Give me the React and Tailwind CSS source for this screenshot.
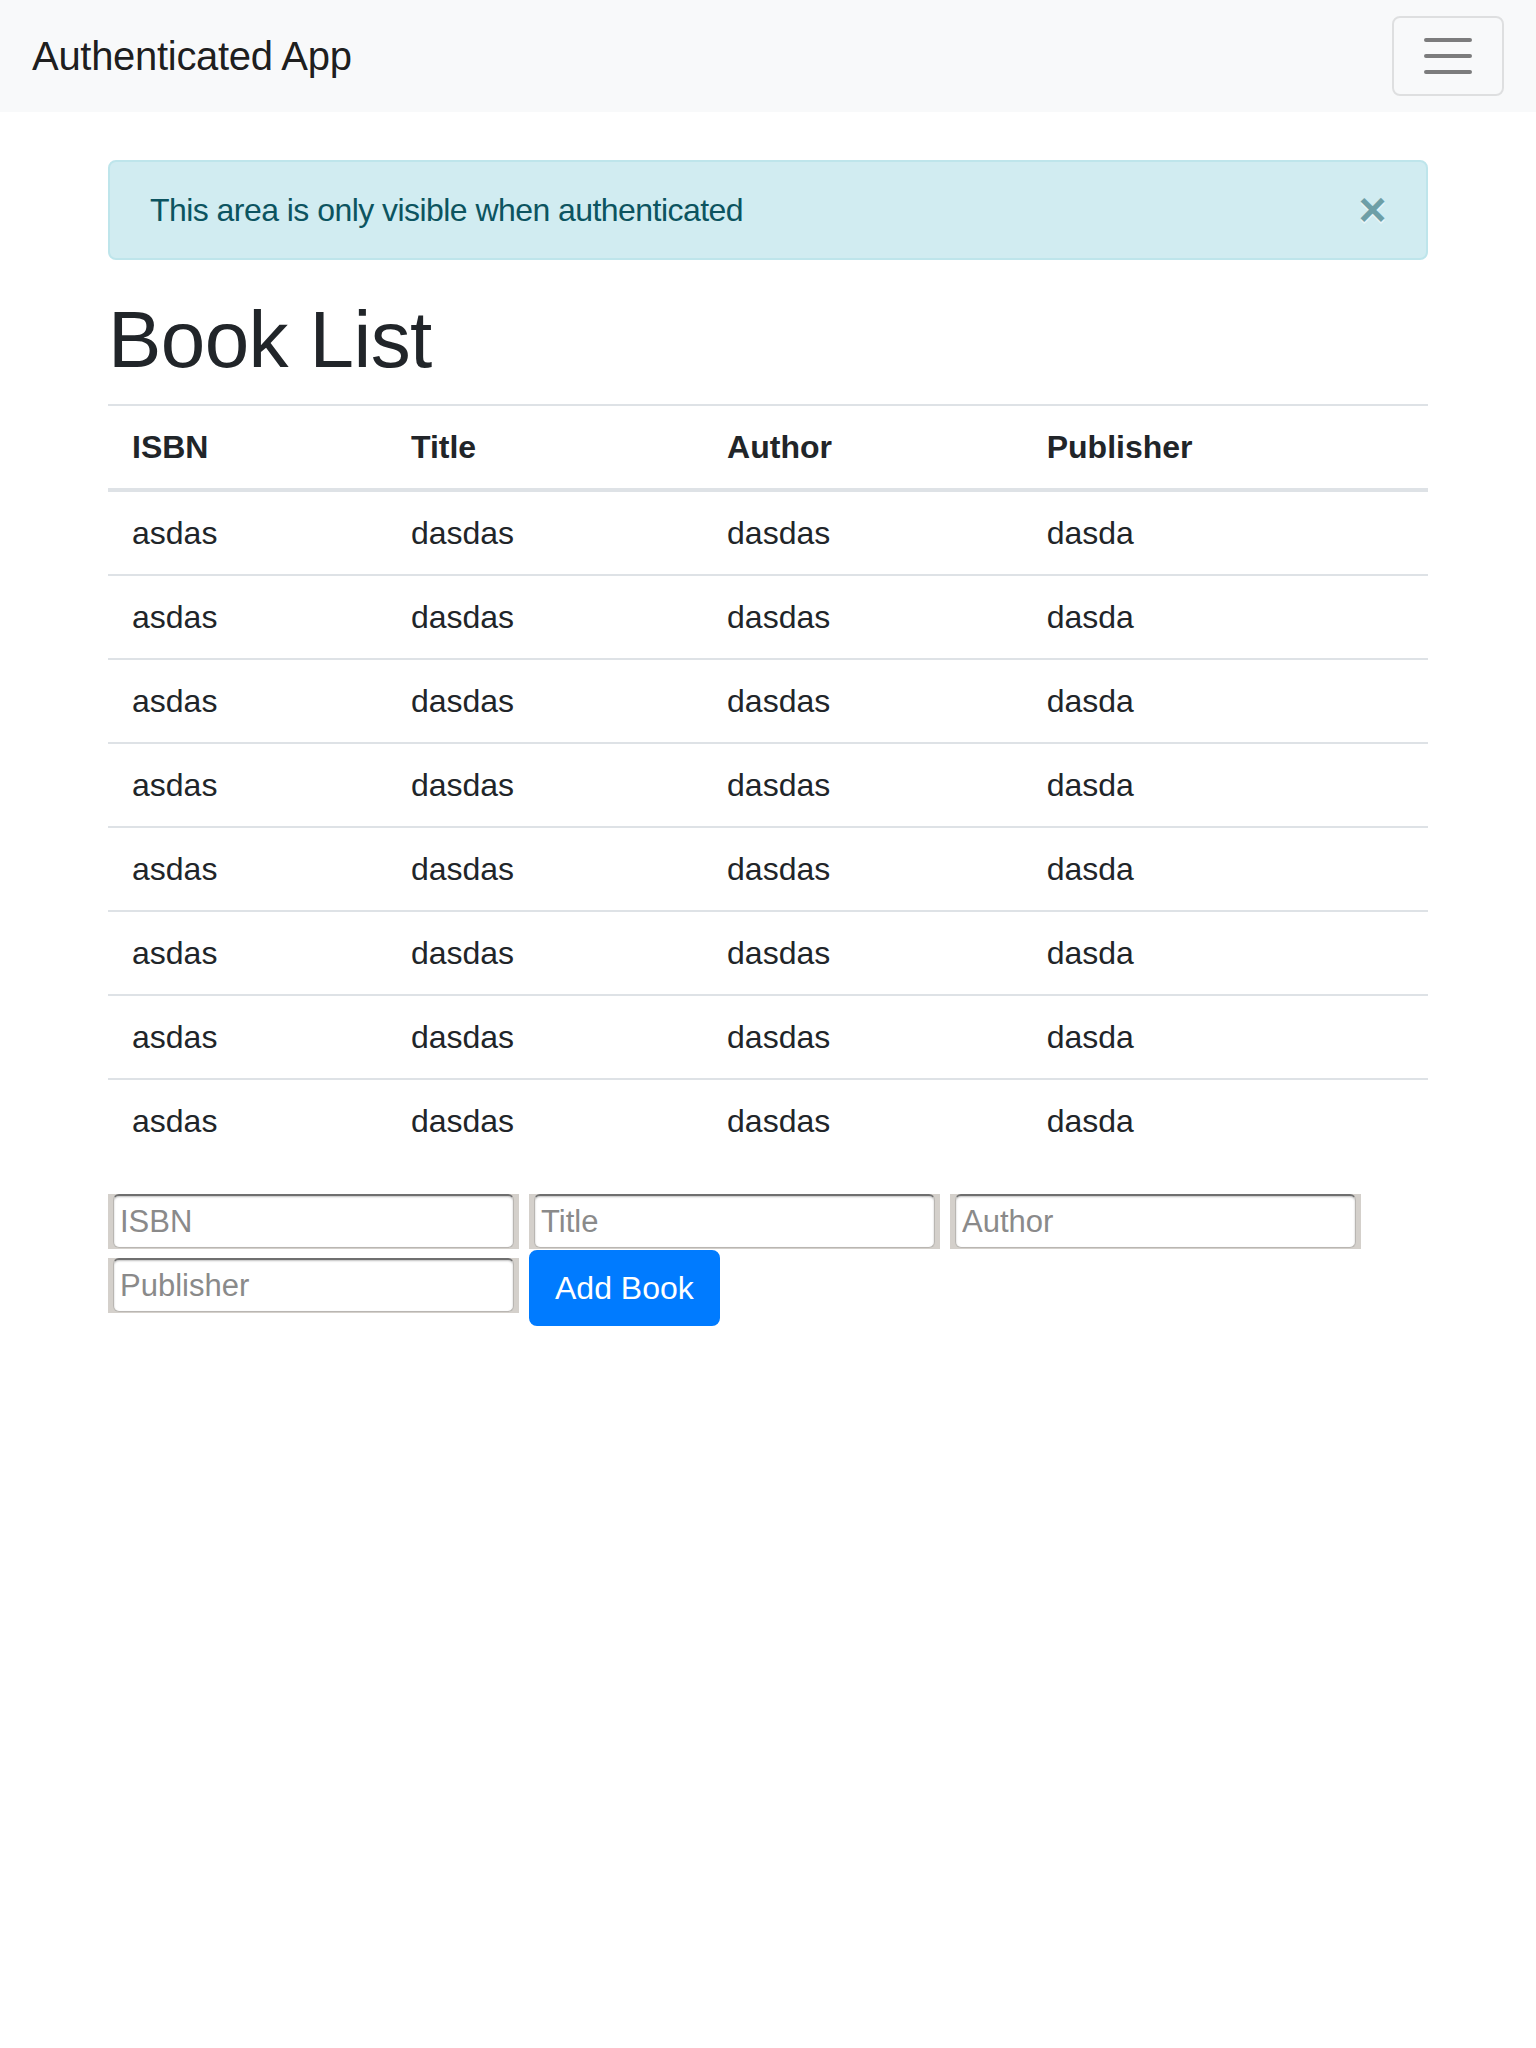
import React from "react";

const rows = Array.from({ length: 8 }, () => ["asdas", "dasdas", "dasdas", "dasda"]);

function FrameInput({ placeholder, className = "" }) {
  return (
    <div className={"w-[411px] h-[55px] bg-[#d4d0cb] px-[5px] pb-[1px] " + className}>
      <div className="h-full rounded-[6px] bg-white border border-[#b9b6b2] border-t-[2px] border-t-[#6f6f6f] shadow-[inset_0_1px_2px_rgba(0,0,0,0.25)] flex items-center">
        <input
          placeholder={placeholder}
          className="w-full h-full bg-transparent outline-none pl-[6px] text-[31px] text-[#212529] placeholder:text-[#8a8a8a] font-['Liberation_Sans',Arial,sans-serif]"
        />
      </div>
    </div>
  );
}

export default function App() {
  return (
    <div className="min-h-screen bg-white font-['Liberation_Sans',Arial,sans-serif] text-[#212529]">
      <nav className="h-[112px] bg-[#f8f9fa] flex items-center justify-between px-[32px]">
        <span className="text-[40px] leading-[60px] tracking-[-0.3px] text-[rgba(0,0,0,0.9)]">Authenticated App</span>
        <button className="w-[112px] h-[80px] border-2 border-[rgba(0,0,0,0.1)] rounded-[8px] flex items-center justify-center">
          <svg width="60" height="60" viewBox="0 0 30 30">
            <path d="M4 7h22M4 15h22M4 23h22" stroke="rgba(0,0,0,0.5)" strokeWidth="2" strokeLinecap="round" strokeMiterlimit="10" fill="none" />
          </svg>
        </button>
      </nav>

      <main className="w-[1320px] mx-auto pt-[48px]">
        <div className="relative rounded-[8px] border-2 border-[#bee5eb] bg-[#d1ecf1] text-[#0c5460] pl-[40px] pr-[128px] py-[24px] text-[32px] leading-[48px] tracking-[-0.55px]">
          This area is only visible when authenticated
          <button className="absolute top-0 right-0 px-[40px] py-[24px] text-[48px] leading-none font-bold text-[#0c5460] opacity-50 [text-shadow:0_2px_0_#fff]">
            ×
          </button>
        </div>

        <h1 className="mt-[32px] mb-[16px] text-[80px] leading-[96px] font-medium tracking-[-0.6px]">Book List</h1>

        <table className="w-full border-separate border-spacing-0 mb-[32px] text-[32px]">
          <thead>
            <tr>
              {["ISBN", "Title", "Author", "Publisher"].map((h) => (
                <th
                  key={h}
                  className="text-left font-bold px-[24px] py-[17px] leading-[48px] border-t-2 border-b-4 border-[#dee2e6]"
                >
                  {h}
                </th>
              ))}
            </tr>
          </thead>
          <tbody>
            {rows.map((r, i) => (
              <tr key={i}>
                {r.map((c, j) => (
                  <td
                    key={j}
                    className={
                      "px-[24px] py-[17px] leading-[48px] " +
                      (i === 0 ? "" : "border-t-2 border-[#dee2e6]")
                    }
                  >
                    {c}
                  </td>
                ))}
              </tr>
            ))}
          </tbody>
        </table>

        <div className="flex flex-wrap items-start gap-x-[10px] gap-y-[1px]">
          <FrameInput placeholder="ISBN" />
          <FrameInput placeholder="Title" />
          <FrameInput placeholder="Author" />
          <FrameInput placeholder="Publisher" className="mt-[8px]" />
          <button className="bg-[#007bff] border-2 border-[#007bff] text-white text-[32px] leading-[48px] px-[24px] py-[12px] rounded-[8px]">
            Add Book
          </button>
        </div>
      </main>
    </div>
  );
}
